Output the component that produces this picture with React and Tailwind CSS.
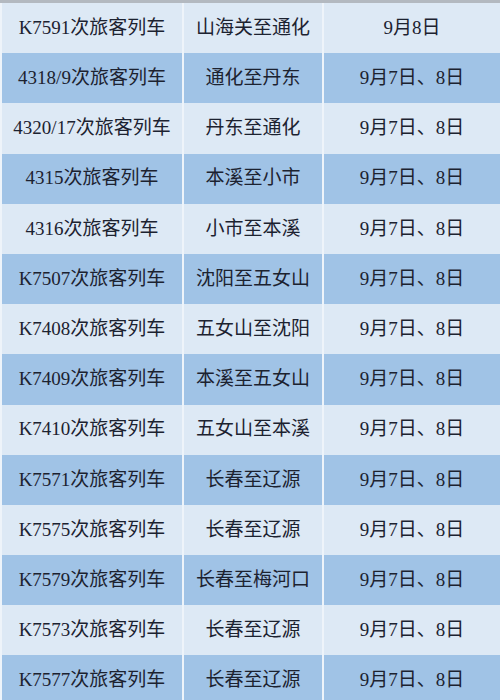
import React from 'react';

const rows = [
    ['K7591次旅客列车', '山海关至通化', '9月8日'],
    ['4318/9次旅客列车', '通化至丹东', '9月7日、8日'],
    ['4320/17次旅客列车', '丹东至通化', '9月7日、8日'],
    ['4315次旅客列车', '本溪至小市', '9月7日、8日'],
    ['4316次旅客列车', '小市至本溪', '9月7日、8日'],
    ['K7507次旅客列车', '沈阳至五女山', '9月7日、8日'],
    ['K7408次旅客列车', '五女山至沈阳', '9月7日、8日'],
    ['K7409次旅客列车', '本溪至五女山', '9月7日、8日'],
    ['K7410次旅客列车', '五女山至本溪', '9月7日、8日'],
    ['K7571次旅客列车', '长春至辽源', '9月7日、8日'],
    ['K7575次旅客列车', '长春至辽源', '9月7日、8日'],
    ['K7579次旅客列车', '长春至梅河口', '9月7日、8日'],
    ['K7573次旅客列车', '长春至辽源', '9月7日、8日'],
    ['K7577次旅客列车', '长春至辽源', '9月7日、8日'],
];

const App = () => {
    return (
        <div
            className="w-[500px] h-[700px] overflow-hidden bg-[#dde9f5] border-t-[3px] border-[#b3b9c0] text-[19px] text-[#1c2230]"
            style={{ fontFamily: '"Liberation Serif", "Noto Sans CJK SC", serif' }}
        >
            {rows.map(([train, route, date], i) => (
                <div
                    key={i}
                    className={`flex h-[50.2px] items-center ${i % 2 === 0 ? 'bg-[#dde9f5]' : 'bg-[#a0c3e6]'}`}
                >
                    <div className="w-[182px] h-full flex items-center justify-center border-l-2 border-[#eef4fa] whitespace-nowrap">
                        {train}
                    </div>
                    <div className="w-[140px] h-full flex items-center justify-center border-l-2 border-[#eef4fa] whitespace-nowrap">
                        {route}
                    </div>
                    <div className="flex-1 h-full flex items-center justify-center border-l-2 border-[#eef4fa] whitespace-nowrap">
                        {date}
                    </div>
                </div>
            ))}
        </div>
    );
};

export default App;
